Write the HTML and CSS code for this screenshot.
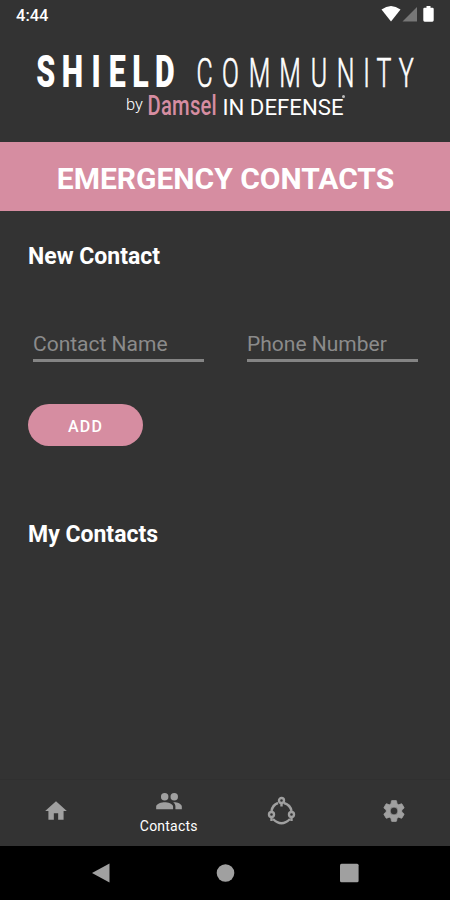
FILE: index.html
```html
<!DOCTYPE html>
<html lang="en">
<head>
  <meta charset="UTF-8" />
  <meta name="viewport" content="width=device-width, initial-scale=1.0" />
  <title>Emergency Contacts</title>
  <link rel="stylesheet" href="styles.css">
</head>
<body>
  <div class="status-bar">
    <span class="time">4:44</span>
    <svg class="status-icons" width="56" height="20" viewBox="0 0 56 20">
      <path fill="#fff" d="M.5 4.500Q10 -2.500 19.500 4.500L10 16.500z"/>
      <path fill="#777" d="M36 2v14.500H21.500z"/>
      <path fill="#fff" d="M45.500 1h4v1.700h2q1.200 0 1.200 1.200v11.400q0 1.400-1.400 1.400h-7.600q-1.400 0-1.400-1.400V3.900q0-1.200 1.200-1.200h2z"/>
    </svg>
  </div>

  <header class="logo">
    <svg width="450" height="80" viewBox="0 0 450 80">
      <text class="shield" transform="scale(.69 1)" x="66.500 105 139.300 169.800 203.700 239" y="49">SHIELD</text>
      <text class="community" transform="scale(.6 1)" x="340.800 384.200 432.500 483.300 531.700 576 610.800 640 677" y="49">COMMUNITY</text>
      <text class="by" x="126" y="72">by</text>
      <text class="damsel" transform="translate(147.500 77) scale(.71 1)" textLength="97.500">Damsel</text>
      <text class="defense" x="222.500" y="77" textLength="121" lengthAdjust="spacingAndGlyphs">IN DEFENSE</text>
      <circle cx="343.500" cy="58.500" r="1.500" fill="#bbb"/>
    </svg>
  </header>

  <h1>EMERGENCY CONTACTS</h1>

  <main>
    <h2>New Contact</h2>
    <form>
      <div class="fields">
        <input type="text" placeholder="Contact Name">
        <input type="text" placeholder="Phone Number">
      </div>
      <button type="button">ADD</button>
    </form>
    <h2 class="my-contacts">My Contacts</h2>
  </main>

  <nav class="tabs">
    <a class="tab">
      <svg width="26" height="26" viewBox="0 0 24 24"><path d="M10 20v-6h4v6h5v-8h3L12 3 2 12h3v8z"/></svg>
    </a>
    <a class="tab active">
      <svg width="28" height="28" viewBox="0 0 24 24"><path d="M16.500 11.500a3.200 3.200 0 1 0 0-6.400 3.200 3.200 0 0 0 0 6.400zM8.300 11.500a3.200 3.200 0 1 0 0-6.400 3.200 3.200 0 0 0 0 6.400zM8.300 13C5.900 13 1 14.200 1 16.700V19h14.500v-2.300C15.500 14.200 10.700 13 8.300 13zM16.500 13l-1 .1c1.200.9 2 2 2 3.600V19H23v-2.300c0-2.500-4.200-3.700-6.500-3.700z"/></svg>
      <span>Contacts</span>
    </a>
    <a class="tab">
      <svg class="ring" width="30" height="30" viewBox="0 0 30 30">
        <path d="M12 7Q6.500 9 5.500 15M18 7Q24.500 9 25.500 15M7 23Q15.500 31.500 24 23"/>
        <circle cx="15.500" cy="4.500" r="2.500"/>
        <circle cx="5.500" cy="18.500" r="2.500"/>
        <circle cx="25.500" cy="18.500" r="2.500"/>
        <path d="M15.500 7v3.500M5.500 21v4M25.500 21v4"/>
      </svg>
    </a>
    <a class="tab">
      <svg width="26" height="26" viewBox="0 0 24 24"><path class="gear" d="M19.140 12.940c.04-.3.060-.61.060-.94s-.02-.64-.07-.94l2.030-1.580c.18-.14.230-.41.120-.61l-1.920-3.320c-.12-.22-.37-.29-.59-.22l-2.390.96c-.5-.38-1.030-.7-1.620-.94l-.36-2.540c-.04-.24-.24-.41-.48-.41h-3.840c-.24 0-.43.17-.47.41l-.36 2.540c-.59.24-1.130.57-1.620.94l-2.390-.96c-.22-.08-.47 0-.59.22L2.740 8.870c-.12.21-.08.47.12.61l2.030 1.580c-.05.3-.09.63-.09.94s.02.64.07.94l-2.030 1.580c-.18.140-.23.410-.12.610l1.920 3.320c.12.22.37.290.59.220l2.390-.96c.5.380 1.030.700 1.620.940l.36 2.540c.05.240.24.410.48.410h3.840c.24 0 .44-.17.470-.41l.36-2.540c.59-.24 1.130-.56 1.620-.94l2.390.96c.22.080.470 0 .590-.22l1.920-3.320c.12-.22.070-.47-.12-.61zM12 15.600A3.600 3.600 0 1 1 12 8.400a3.600 3.600 0 0 1 0 7.200z"/></svg>
    </a>
  </nav>

  <div class="system-nav">
    <svg width="20" height="20" viewBox="0 0 20 20"><path d="M18.500.5v19L1 10z"/></svg>
    <svg width="20" height="20" viewBox="0 0 20 20"><circle cx="10.500" cy="10" r="8.800"/></svg>
    <svg width="20" height="20" viewBox="0 0 20 20"><rect x="1" y=".7" width="18.600" height="18.600" rx="1.500"/></svg>
  </div>
</body>
</html>
```
FILE: styles.css
```css
* {
  box-sizing: border-box;
}
body {
  margin: 0;
  height: 900px;
  display: flex;
  flex-direction: column;
  font-family: Roboto, sans-serif;
  background: #333333;
  color: #fff;
  overflow: hidden;
}
.status-bar {
  height: 38px;
  padding: 5px 13px 0 16px;
  display: flex;
  justify-content: space-between;
}
.time {
  font-size: 16.5px;
  font-weight: 500;
  line-height: 21px;
}
.logo {
  height: 104px;
}
.logo svg {
  display: block;
  overflow: visible;
}
.logo text {
  fill: #fff;
}
.logo .shield {
  font-size: 44px;
  font-weight: 900;
  text-anchor: middle;
}
.logo .community {
  font-size: 41.5px;
  font-weight: 300;
  text-anchor: middle;
  stroke: #fff;
  stroke-width: .7;
}
.logo .by {
  font-size: 16.5px;
  font-weight: 300;
}
.logo .damsel {
  font-size: 28.5px;
  font-weight: 500;
  fill: #d68da1;
}
.logo .defense {
  font-size: 21.5px;
}
h1 {
  margin: 0;
  height: 69px;
  line-height: 73px;
  padding-left: 1px;
  font-size: 30px;
  font-weight: 700;
  text-align: center;
  background: #d68da1;
}
main {
  flex: 1;
  padding: 32px 28px 0;
}
h2 {
  margin: 0;
  font-size: 23px;
  font-weight: 700;
  line-height: 28px;
}
.fields {
  display: flex;
  gap: 43px;
  padding: 57px 4px 0 5px;
}
input {
  flex: 1;
  min-width: 0;
  height: 34px;
  padding: 0;
  border: none;
  border-bottom: 3px solid #848484;
  background: none;
  color: #fff;
  font-family: inherit;
  font-size: 21px;
  outline: none;
}
input::placeholder {
  color: #8b8b8b;
  opacity: 1;
}
button {
  display: block;
  width: 115px;
  height: 42px;
  margin-top: 42px;
  padding: 2px 0 0;
  border: none;
  border-radius: 21px;
  background: #d68da1;
  color: #fff;
  font-family: inherit;
  font-size: 16px;
  font-weight: 500;
  letter-spacing: 1.2px;
}
.my-contacts {
  margin-top: 75px;
}
.tabs {
  height: 67px;
  display: flex;
  border-top: 1px solid #303030;
  padding-bottom: 4px;
}
.tab {
  flex: 1;
  display: flex;
  flex-direction: column;
  align-items: center;
  justify-content: center;
}
.tab svg {
  fill: #a0a0a0;
}
.tab .gear {
  stroke: #a0a0a0;
  stroke-width: .7;
}
.tab .ring {
  fill: none;
  stroke: #a0a0a0;
  stroke-width: 2.4;
}
.tab span {
  padding-top: 2px;
  font-size: 14px;
  line-height: 19px;
  letter-spacing: .2px;
}
.system-nav {
  height: 54px;
  display: flex;
  justify-content: center;
  align-items: center;
  gap: 104px;
  background: #000;
}
.system-nav svg {
  fill: #a0a0a0;
}
```
